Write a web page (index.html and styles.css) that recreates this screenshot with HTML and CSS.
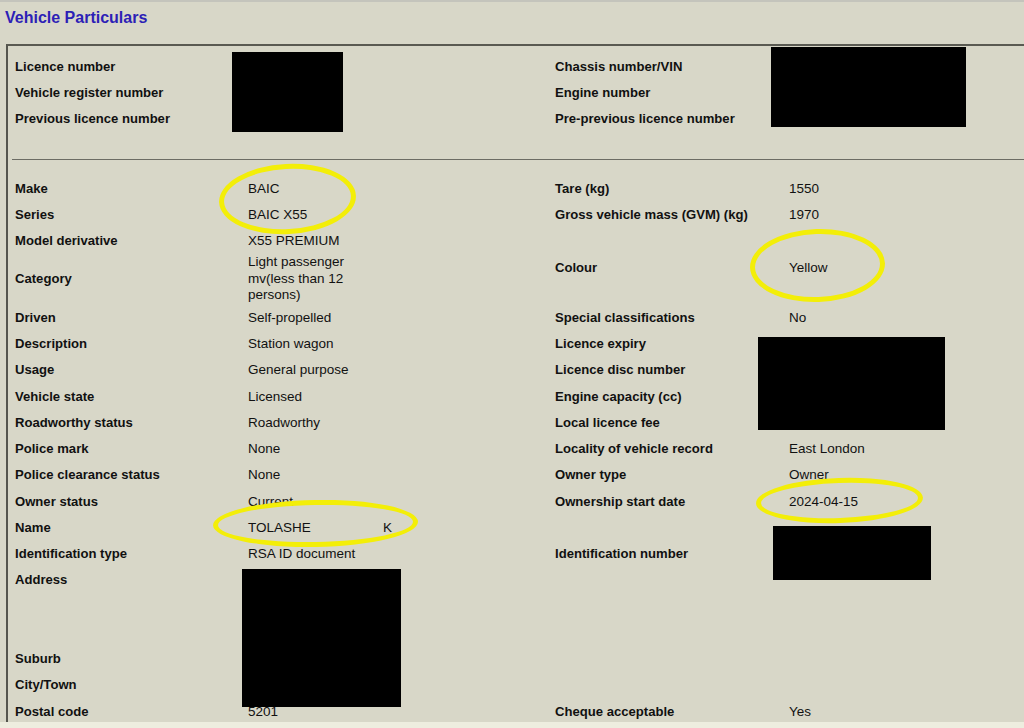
FILE: index.html
```html
<!DOCTYPE html>
<html lang="en">
<head>
<meta charset="utf-8">
<title>Vehicle Particulars</title>
<link rel="stylesheet" href="styles.css">
</head>
<body>
<div class="page">
  <h1 class="title">Vehicle Particulars</h1>
  <div class="panel">
    <div class="grid top">
      <div class="lbl">Licence number</div><div class="val"></div>
      <div class="lbl">Chassis number/VIN</div><div class="val"></div>
      <div class="lbl">Vehicle register number</div><div class="val"></div>
      <div class="lbl">Engine number</div><div class="val"></div>
      <div class="lbl">Previous licence number</div><div class="val"></div>
      <div class="lbl">Pre-previous licence number</div><div class="val"></div>
    </div>
    <hr class="sep">
    <div class="grid main">
      <div class="lbl">Make</div><div class="val">BAIC</div>
      <div class="lbl">Tare (kg)</div><div class="val">1550</div>

      <div class="lbl">Series</div><div class="val">BAIC X55</div>
      <div class="lbl">Gross vehicle mass (GVM) (kg)</div><div class="val">1970</div>

      <div class="lbl">Model derivative</div><div class="val">X55 PREMIUM</div>
      <div class="lbl span2">Colour</div><div class="val span2">Yellow</div>

      <div class="lbl">Category</div><div class="val wrap">Light passenger mv(less than 12 persons)</div>

      <div class="lbl">Driven</div><div class="val">Self-propelled</div>
      <div class="lbl">Special classifications</div><div class="val">No</div>

      <div class="lbl">Description</div><div class="val">Station wagon</div>
      <div class="lbl">Licence expiry</div><div class="val"></div>

      <div class="lbl">Usage</div><div class="val">General purpose</div>
      <div class="lbl">Licence disc number</div><div class="val"></div>

      <div class="lbl">Vehicle state</div><div class="val">Licensed</div>
      <div class="lbl">Engine capacity (cc)</div><div class="val"></div>

      <div class="lbl">Roadworthy status</div><div class="val">Roadworthy</div>
      <div class="lbl">Local licence fee</div><div class="val"></div>

      <div class="lbl">Police mark</div><div class="val">None</div>
      <div class="lbl">Locality of vehicle record</div><div class="val">East London</div>

      <div class="lbl">Police clearance status</div><div class="val">None</div>
      <div class="lbl">Owner type</div><div class="val">Owner</div>

      <div class="lbl">Owner status</div><div class="val">Current</div>
      <div class="lbl">Ownership start date</div><div class="val">2024-04-15</div>

      <div class="lbl">Name</div><div class="val"><span class="surname">TOLASHE</span>K</div>
      <div class="lbl"></div><div class="val"></div>

      <div class="lbl">Identification type</div><div class="val">RSA ID document</div>
      <div class="lbl">Identification number</div><div class="val"></div>

      <div class="lbl">Address</div><div class="val"></div>
      <div class="lbl"></div><div class="val"></div>

      <div class="lbl"></div><div class="val"></div>
      <div class="lbl"></div><div class="val"></div>

      <div class="lbl"></div><div class="val"></div>
      <div class="lbl"></div><div class="val"></div>

      <div class="lbl">Suburb</div><div class="val"></div>
      <div class="lbl"></div><div class="val"></div>

      <div class="lbl">City/Town</div><div class="val"></div>
      <div class="lbl"></div><div class="val"></div>

      <div class="lbl">Postal code</div><div class="val">5201</div>
      <div class="lbl">Cheque acceptable</div><div class="val">Yes</div>
    </div>
  </div>
  <div class="footstrip"></div>

  <div class="redact r-licence"></div>
  <div class="redact r-vin"></div>
  <div class="redact r-expiry"></div>
  <div class="redact r-idnum"></div>
  <div class="redact r-address"></div>

  <div class="ring ring-make"></div>
  <div class="ring ring-colour"></div>
  <div class="ring ring-name"></div>
  <div class="ring ring-date"></div>
</div>
</body>
</html>
```
FILE: styles.css
```css
html, body {
  margin: 0;
  padding: 0;
  background: #d8d7c8;
}

.page {
  position: relative;
  width: 1024px;
  height: 728px;
  overflow: hidden;
  box-sizing: border-box;
  border-top: 2px solid #c4c4bc;
  font-family: "Liberation Sans", Arial, sans-serif;
  color: #111;
}

.title {
  margin: 0;
  padding: 7px 0 0 5px;
  font-size: 16px;
  line-height: 18px;
  font-weight: bold;
  color: #2d1fb6;
}

.panel {
  margin: 17px 0 0 6px;
  height: 678px;
  box-sizing: border-box;
  border-top: 2px solid #5a5a52;
  border-left: 2px solid #55554e;
  overflow: hidden;
}

.grid {
  display: grid;
  grid-template-columns: 233px 307px 234px 1fr;
  padding-left: 7px;
  align-items: center;
}

.top {
  padding-top: 7px;
  grid-auto-rows: 26px;
}

.main {
  padding-top: 15px;
  grid-auto-rows: minmax(26.25px, auto);
}

.sep {
  margin: 28px 0 0 4px;
  height: 0;
  border: 0;
  border-top: 1px solid #6c6c64;
}

.lbl {
  font-weight: bold;
  font-size: 13.1px;
  white-space: nowrap;
}

.val {
  font-size: 13.5px;
  white-space: nowrap;
}

.span2 {
  grid-row: span 2;
  padding-top: 4px;
}

.wrap {
  white-space: normal;
  width: 112px;
  line-height: 16.8px;
}

.surname {
  display: inline-block;
  width: 135px;
}

.footstrip {
  height: 6px;
  background: #eeeddf;
}

.redact {
  position: absolute;
  background: #000;
}

.r-licence { left: 232px; top: 50px; width: 111px; height: 80px; }
.r-vin     { left: 771px; top: 45px; width: 195px; height: 80px; }
.r-expiry  { left: 758px; top: 335px; width: 187px; height: 93px; }
.r-idnum   { left: 773px; top: 524px; width: 158px; height: 54px; }
.r-address { left: 242px; top: 567px; width: 159px; height: 138px; }

.ring {
  position: absolute;
  box-sizing: border-box;
  border: 5px solid #f3ee08;
  border-radius: 50%;
}

.ring-make   { left: 219px; top: 162px; width: 137px; height: 70px; transform: rotate(-3deg); }
.ring-colour { left: 750px; top: 227px; width: 135px; height: 73px; transform: rotate(-2deg); }
.ring-name   { left: 213px; top: 498px; width: 205px; height: 47px; transform: rotate(-1deg); }
.ring-date   { left: 756px; top: 476px; width: 167px; height: 45px; transform: rotate(-2deg); }
```
